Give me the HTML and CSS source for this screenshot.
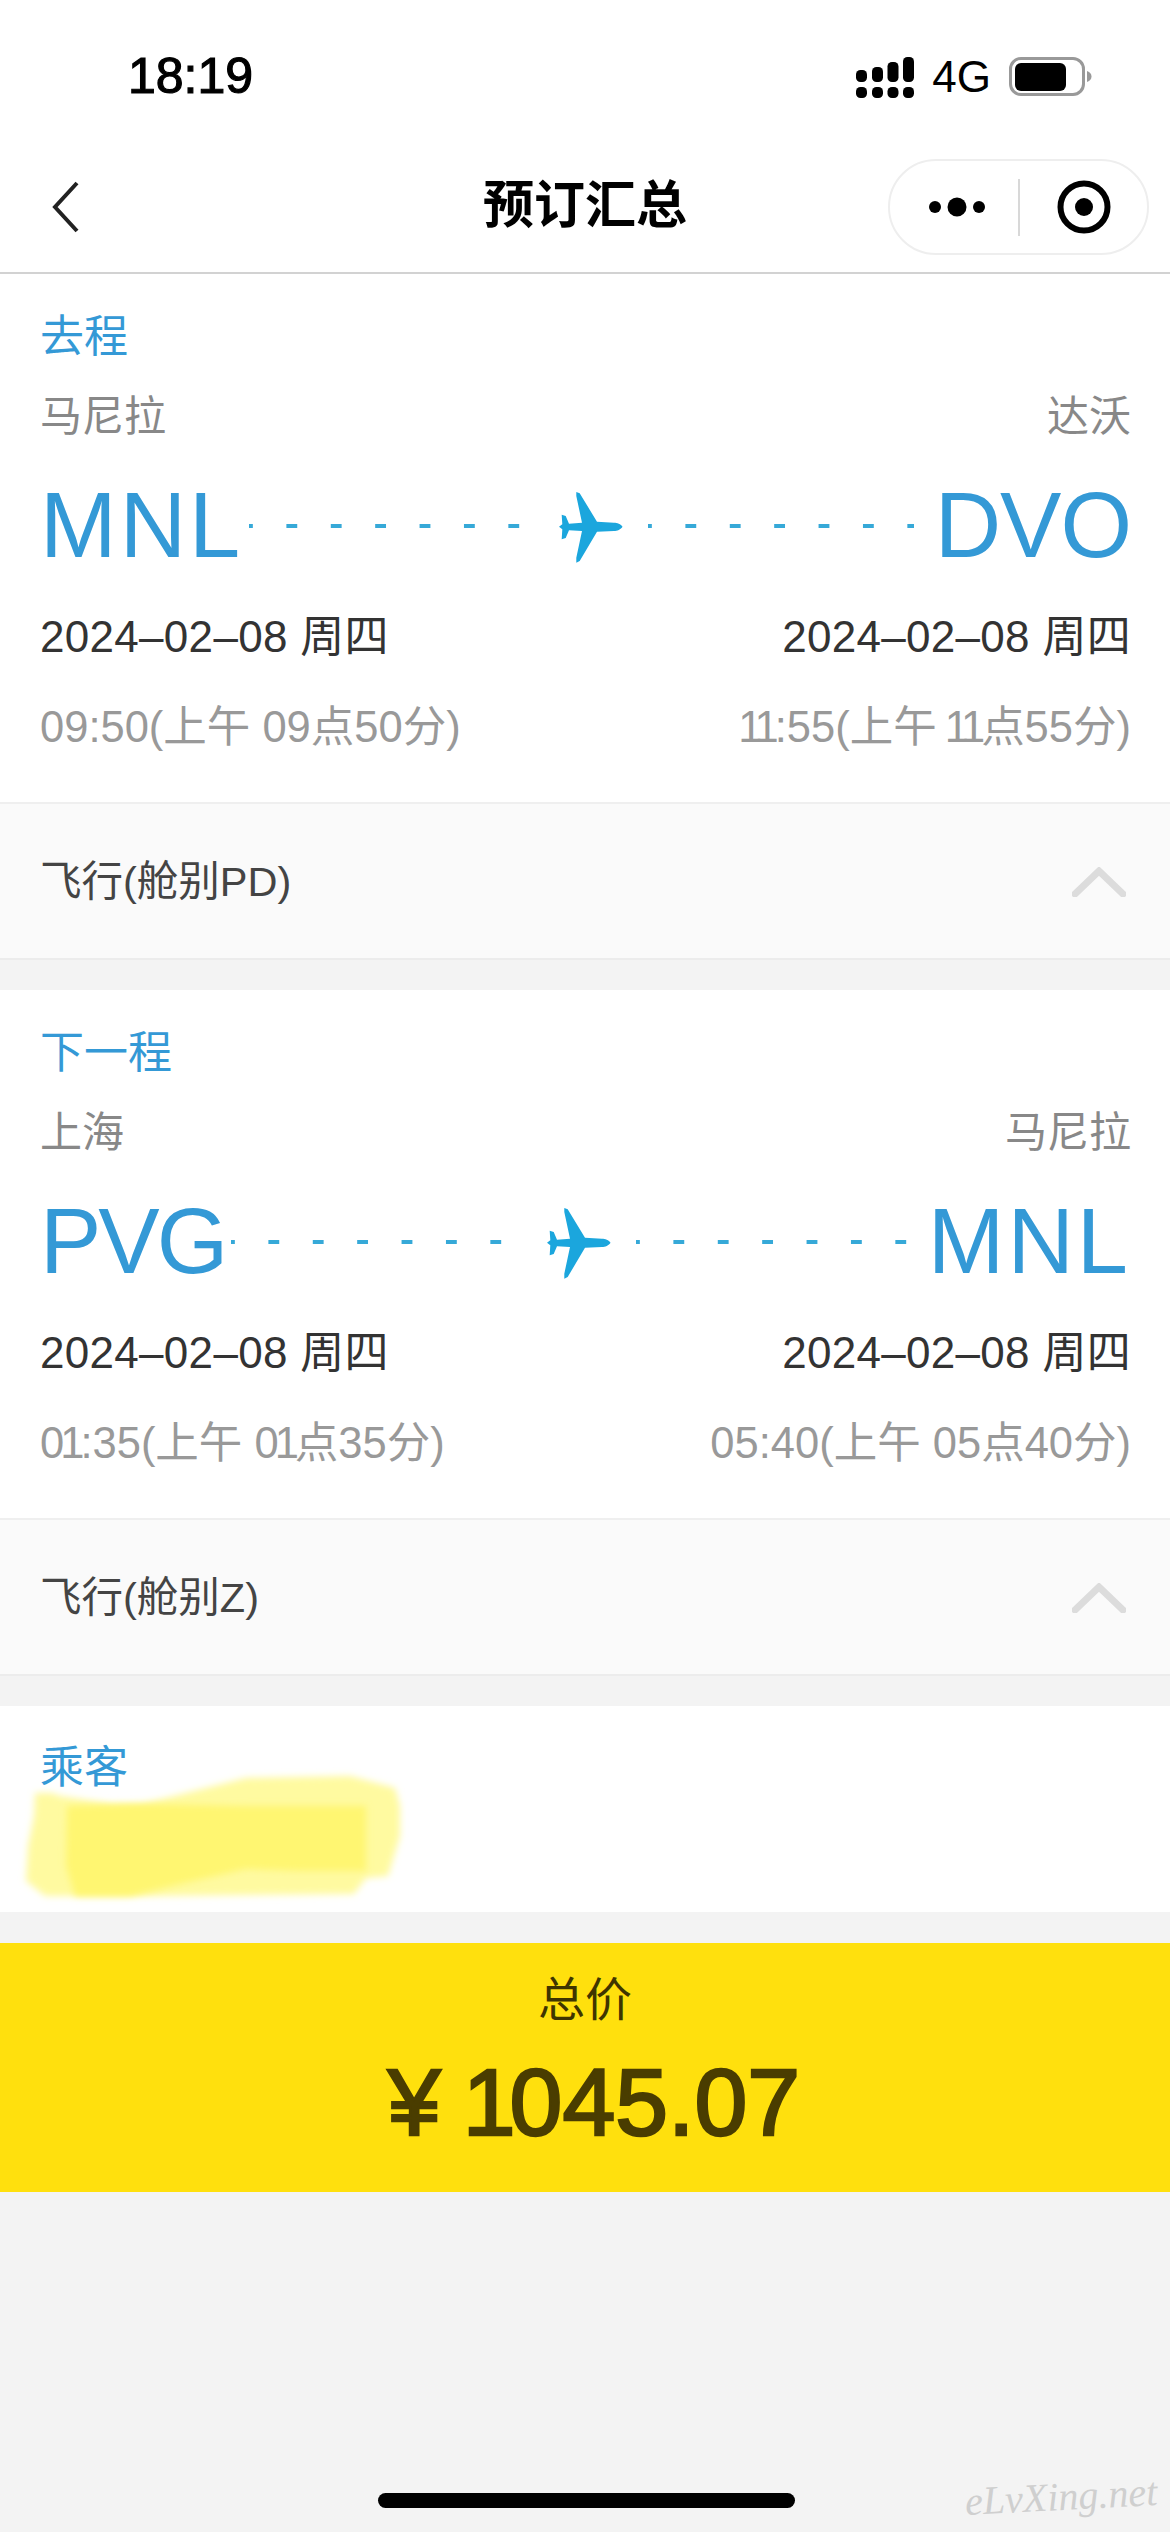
FILE: index.html
```html
<!DOCTYPE html>
<html lang="zh-CN">
<head>
<meta charset="utf-8">
<title>预订汇总</title>
<link rel="stylesheet" href="styles.css">
</head>
<body>
<div class="page">
  <header class="status">
    <span class="clock">18:19</span>
    <div class="status-right">
      <svg class="signal" width="58" height="41" viewBox="0 0 58 41"><g fill="#000"><rect x="0" y="13" width="11" height="12" rx="4.5"/><rect x="16" y="10" width="11" height="15" rx="4.5"/><rect x="31.500" y="5" width="11" height="20" rx="4.5"/><rect x="47" y="0" width="11" height="25" rx="4.5"/><rect x="0" y="30" width="11" height="11" rx="4.5"/><rect x="16" y="30" width="11" height="11" rx="4.5"/><rect x="31.500" y="30" width="11" height="11" rx="4.5"/><rect x="47" y="30" width="11" height="11" rx="4.5"/></g></svg>
      <span class="net">4G</span>
      <svg class="battery" width="83" height="40" viewBox="0 0 83 40"><rect x="1.5" y="1.5" width="73" height="36" rx="10.5" fill="#fff" stroke="#999" stroke-width="3"/><rect x="6" y="6" width="51" height="28" rx="6" fill="#000"/><path d="M78 14c3 1 4.500 3 4.500 5.500S81 24 78 25z" fill="#999"/></svg>
    </div>
  </header>

  <nav class="nav">
    <svg class="back" width="27" height="52" viewBox="0 0 27 52"><path d="M25 2 3 26l22 24" fill="none" stroke="#222" stroke-width="4"/></svg>
    <h1 class="nav-title">预订汇总</h1>
    <div class="capsule">
      <svg width="60" height="20" viewBox="0 0 60 20" class="more"><circle cx="7" cy="10" r="6" fill="#000"/><circle cx="29" cy="10" r="9.500" fill="#000"/><circle cx="51" cy="10" r="6" fill="#000"/></svg>
      <span class="capsule-line"></span>
      <svg width="54" height="54" viewBox="0 0 54 54" class="target"><circle cx="27" cy="27" r="23.500" fill="none" stroke="#000" stroke-width="6"/><circle cx="27" cy="27" r="9" fill="#000"/></svg>
    </div>
  </nav>

  <section class="leg">
    <div class="leg-info">
      <div class="leg-title">去程</div>
      <div class="row city"><span>马尼拉</span><span>达沃</span></div>
      <div class="route">
        <span class="code code-wide">MNL</span>
        <span class="dash dash-in"></span>
        <svg class="plane" width="64" height="71" viewBox="0 0 64 71"><path d="M63.500 34.700C62 32 58 30.700 55 30.700L38 29.700 20.700 1.300 17.300 0v4L23 30.700 10 31.700 6.700 24l-4-1.300.6 9.600L0 34.700l3.300 2.600-.6 10 4-1.300L10 38.300l13 .7-5.700 26.700v5l3.400-1.700L38 39.700 55 39c3 0 7-1.600 8.500-4.300z" fill="#1ba6dd"/></svg>
        <span class="dash dash-out"></span>
        <span class="code code-snug">DVO</span>
      </div>
      <div class="row date"><span>2024–02–08 周四</span><span>2024–02–08 周四</span></div>
      <div class="row time"><span>09:50(上午 09点50分)</span><span><span class="one">1</span><span class="one">1</span>:55(上午 <span class="one">1</span><span class="one">1</span>点55分)</span></div>
    </div>
    <div class="cabin">
      <span>飞行(舱别PD)</span>
      <svg class="chevron" width="54" height="30" viewBox="0 0 54 30"><path d="M3 27 27 4l24 23" fill="none" stroke="#dcdcdc" stroke-width="7" stroke-linecap="round"/></svg>
    </div>
  </section>

  <section class="leg">
    <div class="leg-info">
      <div class="leg-title">下一程</div>
      <div class="row city"><span>上海</span><span>马尼拉</span></div>
      <div class="route">
        <span class="code code-tight">PVG</span>
        <span class="dash dash-in"></span>
        <svg class="plane" width="64" height="71" viewBox="0 0 64 71"><path d="M63.500 34.700C62 32 58 30.700 55 30.700L38 29.700 20.700 1.300 17.300 0v4L23 30.700 10 31.700 6.700 24l-4-1.300.6 9.600L0 34.700l3.300 2.600-.6 10 4-1.300L10 38.300l13 .7-5.700 26.700v5l3.400-1.700L38 39.700 55 39c3 0 7-1.600 8.500-4.300z" fill="#1ba6dd"/></svg>
        <span class="dash dash-out"></span>
        <span class="code code-wide">MNL</span>
      </div>
      <div class="row date"><span>2024–02–08 周四</span><span>2024–02–08 周四</span></div>
      <div class="row time"><span>0<span class="one">1</span>:35(上午 0<span class="one">1</span>点35分)</span><span>05:40(上午 05点40分)</span></div>
    </div>
    <div class="cabin">
      <span>飞行(舱别Z)</span>
      <svg class="chevron" width="54" height="30" viewBox="0 0 54 30"><path d="M3 27 27 4l24 23" fill="none" stroke="#dcdcdc" stroke-width="7" stroke-linecap="round"/></svg>
    </div>
  </section>

  <section class="passenger">
    <div class="leg-title">乘客</div>
    <svg class="scribble" width="410" height="140" viewBox="0 0 410 140">
      <defs><filter id="soft" x="-5%" y="-10%" width="110%" height="120%"><feGaussianBlur stdDeviation="3.500"/></filter></defs>
      <path d="M35 27h17l8 3 52 8h30l48-12 56-14 104-2 45 12 5 18v30l-12 40-22 2-12 16-204 2H45l-19-15 2-35 6-30z" fill="#fffaa0" filter="url(#soft)"/>
      <path d="M67 40l75-2 104 2h120v65h-66l-54-2-66 15-50 12H75l-9-30z" fill="#fff671" filter="url(#soft)"/>
    </svg>
  </section>

  <section class="total">
    <div class="total-label">总价</div>
    <div class="total-amount"><span class="yen">¥</span><span class="amount-one">1</span>045.07</div>
  </section>

  <div class="home-bar"></div>
  <span class="watermark">eLvXing.net</span>
</div>
</body>
</html>
```
FILE: styles.css
```css
* { box-sizing: border-box; }
html, body { margin: 0; padding: 0; }
body {
  width: 1170px;
  height: 2532px;
  overflow: hidden;
  background: #f3f3f3;
  font-family: "Liberation Sans", "Noto Sans CJK SC", sans-serif;
}
.page {
  position: relative;
  display: flex;
  flex-direction: column;
  width: 1170px;
  height: 2532px;
}
.status {
  display: flex;
  justify-content: space-between;
  align-items: center;
  height: 130px;
  padding: 38px 78px 16px 128px;
  background: #fff;
}
.clock {
  font-family: "Liberation Sans", sans-serif;
  font-size: 50px;
  color: #000;
  -webkit-text-stroke: 1.200px #000;
}
.status-right { display: flex; align-items: center; margin-top: 2px; }
.signal { margin-right: 18px; }
.net { font-size: 44px; color: #000; margin-right: 18px; }
.nav {
  position: relative;
  display: flex;
  align-items: center;
  justify-content: space-between;
  height: 144px;
  padding: 0 21px 0 52px;
  background: #fff;
  border-bottom: 2px solid #d2d2d2;
}
.nav-title {
  position: absolute;
  left: 0;
  right: 0;
  margin: 0;
  text-align: center;
  font-size: 51px;
  font-weight: 700;
  color: #000;
}
.back { margin-top: 12px; }
.capsule {
  display: flex;
  align-items: center;
  width: 261px;
  height: 96px;
  margin-top: 12px;
  border: 2px solid #eeeeee;
  border-radius: 48px;
  background: #fff;
  padding-left: 38px;
}
.more { flex: none; }
.capsule-line {
  width: 2px;
  height: 57px;
  margin: 0 37px 0 30px;
  background: #d8d8d8;
}
.leg {
  background: #fff;
  margin-bottom: 30px;
}
.leg-info {
  height: 528px;
  padding: 23px 39px 0 40px;
}
.leg-title {
  height: 80px;
  line-height: 80px;
  font-size: 44px;
  color: #3499d6;
}
.row {
  display: flex;
  justify-content: space-between;
}
.city {
  height: 80px;
  line-height: 80px;
  font-size: 42px;
  color: #888;
}
.route {
  display: flex;
  align-items: center;
  height: 136px;
}
.code {
  font-size: 92px;
  line-height: 136px;
  color: #3499d6;
}
.code-wide { letter-spacing: 3px; }
.code-snug { letter-spacing: -1px; }
.code-tight { letter-spacing: -3px; }
.dash {
  height: 4px;
  margin-top: 1px;
  background: linear-gradient(90deg, #36a9d8 11px, transparent 11px) -7px 0 / 44.400px 100% repeat-x;
}
.dash-in { flex: 1 1 12px; margin-left: 6px; }
.dash-out { flex: 1 1 0; margin-right: 21px; }
.plane {
  flex: none;
  margin: 4px 25px 0 32px;
}
.date {
  height: 88px;
  line-height: 88px;
  font-size: 44px;
  letter-spacing: 0.3px;
  color: #333;
}
.time {
  height: 92px;
  line-height: 92px;
  font-size: 43.500px;
  color: #999;
}
.one { margin-left: -4px; letter-spacing: -4px; }
.cabin {
  display: flex;
  align-items: center;
  justify-content: space-between;
  height: 158px;
  padding: 0 44px 6px 40px;
  background: #fafafa;
  border-top: 2px solid #efefef;
  border-bottom: 2px solid #ececec;
  font-size: 41.500px;
  color: #444;
}
.chevron { margin-top: 8px; }
.passenger {
  position: relative;
  height: 206px;
  padding-top: 22px;
  margin-bottom: 31px;
  background: #fff;
}
.passenger .leg-title {
  padding-left: 40px;
}
.scribble {
  position: absolute;
  left: 0;
  top: 60px;
}
.total {
  display: flex;
  flex-direction: column;
  align-items: center;
  height: 249px;
  background: #ffe00d;
  color: #4a3d00;
}
.total-label {
  margin-top: 22px;
  font-size: 47px;
  line-height: 70px;
  color: #3f3500;
}
.total-amount {
  margin: 17px 0 0 18px;
  font-size: 95px;
  line-height: 100px;
  -webkit-text-stroke: 2.500px #4a3d00;
}
.yen { margin-right: 22px; }
.amount-one { letter-spacing: -6px; }
.home-bar {
  width: 417px;
  height: 15px;
  margin: auto 0 24px 378px;
  border-radius: 8px;
  background: #000;
}
.watermark {
  position: absolute;
  left: 965px;
  top: 2473px;
  font-family: "Liberation Serif", serif;
  font-style: italic;
  font-size: 40px;
  color: #cfcfcf;
  transform: rotate(-3deg);
}
```
